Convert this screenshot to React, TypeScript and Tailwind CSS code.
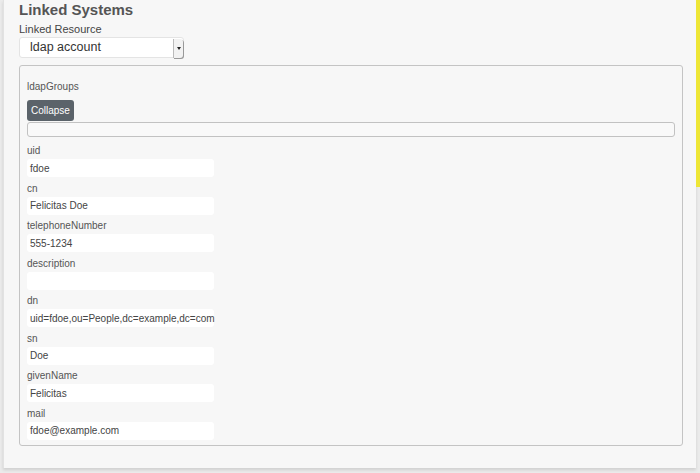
export default function App() {
  const fields = [
    ["uid", "fdoe"],
    ["cn", "Felicitas Doe"],
    ["telephoneNumber", "555-1234"],
    ["description", ""],
    ["dn", "uid=fdoe,ou=People,dc=example,dc=com"],
    ["sn", "Doe"],
    ["givenName", "Felicitas"],
    ["mail", "fdoe@example.com"],
  ];
  return (
    <div className="w-[700px] h-[473px] bg-[#ebebeb] relative overflow-hidden" style={{ fontFamily: "'Liberation Sans', Arial, sans-serif" }}>
      <div className="absolute right-0 top-0 w-[4px] h-[187px] bg-[#eee636]" />
      <div className="ml-[3px] mr-[4px] h-[468px] bg-[#f7f7f7] border-l border-[#e2e2e2] shadow-[0_2px_3px_rgba(0,0,0,0.12)] pl-[15px] pr-[15px] pt-0">
        <div className="text-[15px] font-bold text-[#555] leading-[20px]">Linked Systems</div>
        <div className="text-[11px] text-[#444] leading-[14px] mt-[2px]">Linked Resource</div>
        <div className="mt-[1px] w-[165px] h-[21px] bg-white rounded-[3px] border border-[#e4e4e4] flex items-center relative">
          <span className="text-[12.5px] text-[#333] pl-[10px]">ldap account</span>
          <div className="absolute right-0 top-[1px] w-[10px] h-[19px] border-l border-[#bbb] bg-[#f2f2f2] rounded-r-[3px] shadow-[1px_1px_0_#999] flex items-center justify-center">
            <div className="w-0 h-0 border-l-[2px] border-r-[2px] border-t-[3px] border-l-transparent border-r-transparent border-t-[#222]" />
          </div>
        </div>
        <div className="mt-[7px] w-[664px] h-[381px] border border-[#c4c4c4] rounded-[3px] pl-[7px] pr-[7px] pt-[15px]">
          <div className="text-[10px] text-[#555] leading-[12px]">ldapGroups</div>
          <button className="mt-[7px] h-[21px] px-[4px] bg-[#5b636a] text-white text-[10px] rounded-[3px]">Collapse</button>
          <div className="mt-[1px] h-[15px] w-[648px] border border-[#c2c2c2] rounded-[3px] bg-[#f9f9f9]" />
          <div className="mt-[8px] flex flex-col gap-[5.5px]">
            {fields.map(([l, v]) => (
              <div key={l}>
                <div className="text-[10px] text-[#555] leading-[12px]">{l}</div>
                <div className="mt-[2px] w-[187px] h-[18px] bg-white rounded-[3px] flex items-center pl-[3px] text-[10px] text-[#444]">{v}</div>
              </div>
            ))}
          </div>
        </div>
      </div>
    </div>
  );
}
